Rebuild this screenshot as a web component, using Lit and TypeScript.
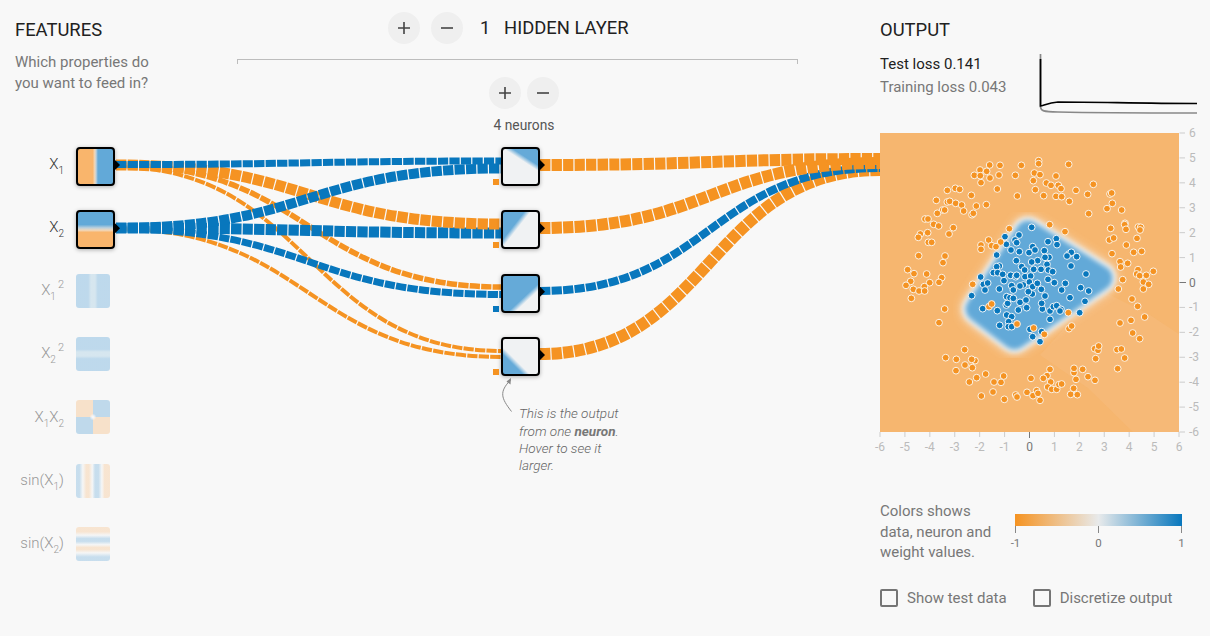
import { LitElement, html, css, svg } from "lit";
import { customElement } from "lit/decorators.js";

const BLUE = "#0877bd";
const ORANGE = "#f59322";

// x1, y1, x2, y2, width, colour. Listed back-to-front.
const LINKS: Array<[number, number, number, number, number, string]> = [
  [116, 229, 502, 357, 4, ORANGE],
  [116, 167, 502, 351, 4, ORANGE],
  [116, 229, 502, 294.5, 7, BLUE],
  [116, 165, 502, 287, 5.5, ORANGE],
  [116, 228, 502, 233, 11, BLUE],
  [116, 165, 502, 224, 11, ORANGE],
  [116, 228, 502, 168.5, 10, BLUE],
  [116, 164.5, 502, 161, 7, BLUE],
  [540, 354, 880, 170, 12, ORANGE],
  [540, 291, 880, 168, 8, BLUE],
  [540, 228, 880, 163, 12, ORANGE],
  [540, 165, 880, 159, 12, ORANGE],
];

const z6 = (p: number[][]) => p.map(([x, y]) => [870 + x / 3, 130 + y / 3]);
const z7 = (p: number[][]) => p.map(([x, y]) => [870 + x / 3, 290 + y / 3]);
const z10 = (p: number[][]) => p.map(([x, y]) => [960 + x / 3, 215 + y / 3]);

const ORANGE_POINTS = [
  ...z6([
    [359,105],[390,106],[330,120],[350,124],[313,136],[331,137],[387,135],[360,144],[333,158],[382,177],[232,181],[256,175],[269,178],[304,196],[199,211],[232,216],[239,214],[257,220],[275,225],[319,228],[349,224],[218,240],[224,240],[202,250],[281,243],[306,254],[310,250],[165,267],[174,267],[191,283],[206,288],[250,293],[151,312],[173,308],[145,322],[237,312],[175,337],[185,337],[146,377],[225,378],[219,398],[113,419],[132,431],[170,432],[215,443],[207,457],[122,454],[108,466],[179,458],[163,470],[130,478],[147,483],[164,483],
    [454,106],[506,92],[506,101],[596,103],[436,136],[493,129],[510,134],[558,138],[490,152],[529,159],[543,166],[565,166],[573,176],[496,179],[618,181],[670,163],[653,193],[442,198],[521,197],[558,199],[575,200],[598,214],[720,192],[725,189],[727,220],[711,236],[755,240],[656,251],[765,280],[764,284],[722,295],[768,298],[805,291],[812,292],[810,300],[718,330],[731,324],[801,325],[769,345],[791,367],[815,364],[726,371],[750,395],[773,400],[752,411],[804,419],[800,432],[809,437],[829,436],[850,424],[758,449],[820,456],[836,463],[820,477],[745,477],
    [539,284],[585,305],[418,296],[356,330],[333,345],[333,358],[392,336],[365,347],[378,350],[308,463],
  ]),
  ...z7([
    [124,25],[224,57],[207,98],[357,50],[365,42],[441,102],[491,114],[523,133],[595,68],[597,116],[605,108],[786,27],[803,49],[824,81],[750,99],[783,91],[788,129],[809,146],[284,179],[227,203],[259,208],[315,212],[305,208],[285,225],[307,233],[258,242],[347,252],[320,263],[298,276],[372,276],[393,277],[401,258],[334,318],[369,306],[437,315],[441,321],[403,328],[471,307],[489,317],[500,302],[504,310],[510,331],[483,265],[531,257],[520,265],[540,238],[542,276],[533,291],[545,298],[560,298],[567,284],[575,282],[602,313],[622,314],[611,295],[618,268],[612,248],[612,235],[638,238],[654,260],[675,271],[674,176],[684,181],[686,168],[677,206],[741,179],[754,177],[764,204],[743,236],
  ]),
];

const BLUE_POINTS = z10([
  [215,37],[135,65],[177,60],[165,75],[170,83],[139,88],[153,105],[178,110],[110,120],[207,113],[218,95],[225,105],[253,107],[264,80],[289,71],[291,89],[327,117],[334,112],[321,123],[350,125],[333,153],[267,127],[255,127],[169,137],[233,137],[215,141],[261,148],[118,153],[110,155],[100,173],[113,173],[128,178],[62,186],[132,197],[70,208],[83,204],[75,225],[118,222],[155,212],[152,181],[167,185],[185,155],[194,165],[221,163],[243,163],[170,181],[195,185],[212,183],[208,201],[190,210],[218,215],[232,205],[244,223],[265,165],[264,193],[278,170],[283,203],[316,205],[305,225],[362,218],[386,228],[378,177],[375,259],[330,248],[359,293],[35,242],[68,281],[112,287],[139,270],[143,265],[140,245],[150,248],[160,250],[180,262],[198,255],[200,278],[175,285],[140,300],[155,305],[146,320],[119,331],[145,335],[155,335],[210,343],[218,365],[240,380],[245,350],[270,288],[270,313],[247,282],[245,265],[255,243],[217,237],[205,230],[160,225],[180,213],[280,275],[290,272],[303,283],[300,288],
]);

const AXIS = [-6, -5, -4, -3, -2, -1, 0, 1, 2, 3, 4, 5, 6];
const OX = 880;
const OY = 125;
const axisX = (v: number) => (v + 6) * (299 / 12);
const axisY = (v: number) => 8 + (6 - v) * (299 / 12);
const toField = (pts: number[][]) => pts.map(([x, y]) => `${x - OX},${y - OY}`).join(" ");

const BLOB = toField([
  [1028, 233],
  [1100, 278],
  [1014.5, 337],
  [978, 309],
]);
const PALE_BAND = toField([
  [1100, 290],
  [1150, 315],
  [1180, 335],
  [1180, 432],
  [1133, 432],
  [1088, 388],
  [1040, 355],
]);

const FEATURES = [
  { cls: "x1", on: true, label: html`X<sub>1</sub>` },
  { cls: "x2", on: true, label: html`X<sub>2</sub>` },
  { cls: "x1s", on: false, label: html`X<sub>1</sub><sup>2</sup>` },
  { cls: "x2s", on: false, label: html`X<sub>2</sub><sup>2</sup>` },
  { cls: "xx", on: false, label: html`X<sub>1</sub>X<sub>2</sub>` },
  { cls: "s1", on: false, label: html`sin(X<sub>1</sub>)` },
  { cls: "s2", on: false, label: html`sin(X<sub>2</sub>)` },
];

const NEURONS = [
  { cls: "n1", bias: "orange" },
  { cls: "n2", bias: "orange" },
  { cls: "n3", bias: "blue" },
  { cls: "n4", bias: "orange" },
];

@customElement("app-root")
export class AppRoot extends LitElement {
  static styles = css`
    :host {
      display: block;
      width: 1210px;
      height: 636px;
      background: #f8f8f8;
      font-family: Roboto, "Liberation Sans", sans-serif;
      color: #777;
      overflow: hidden;
    }
    .app {
      position: relative;
      display: grid;
      grid-template-columns: 237px 643px 330px;
      height: 636px;
    }
    .links {
      position: absolute;
      left: 0;
      top: 0;
      width: 1210px;
      height: 636px;
    }
    .col {
      position: relative;
      min-width: 0;
    }
    h4 {
      margin: 0 0 -1px;
      padding-top: 1px;
      font-size: 18.4px;
      font-weight: 400;
      line-height: 20px;
      color: #212121;
      text-transform: uppercase;
    }
    /* features */
    .features {
      padding: 19px 0 0 15px;
    }
    .question {
      margin: 13px 0 0;
      font-size: 15px;
      line-height: 21px;
      color: #777;
    }
    .rows {
      margin: 53px 0 0 -15px;
      display: flex;
      flex-direction: column;
    }
    .row {
      height: 63.33px;
      display: flex;
      align-items: flex-start;
    }
    .label {
      width: 64px;
      height: 33px;
      display: flex;
      align-items: center;
      justify-content: flex-end;
      font-size: 15px;
      font-weight: 300;
      color: #333;
      white-space: nowrap;
    }
    .label sub {
      font-size: 10px;
      vertical-align: -5px;
      line-height: 0;
    }
    .label sup {
      font-size: 11px;
      vertical-align: 7px;
      line-height: 0;
      margin-left: 2px;
    }
    .row.off .label {
      color: #999;
    }
    .box {
      position: relative;
      box-sizing: border-box;
      width: 39px;
      height: 39px;
      margin-left: 12px;
      border: 2px solid #000;
      border-radius: 4px;
      box-shadow: 0 1px 4px rgba(0, 0, 0, 0.3);
    }
    .box::after {
      content: "";
      position: absolute;
      right: -7px;
      top: 11px;
      width: 5px;
      height: 10px;
      background: #000;
      clip-path: polygon(0 0, 100% 50%, 0 100%);
    }
    .row.off .box {
      width: 34px;
      height: 34px;
      border: none;
      box-shadow: none;
      opacity: 0.32;
      border-radius: 3px;
    }
    .row.off .box::after {
      display: none;
    }
    .x1 {
      background: linear-gradient(to right, #f9b56c 0 42%, #f0d8bc 48%, #b9cfdd 52%, #62a9d8 57%, #62a9d8 100%);
    }
    .x2 {
      background: linear-gradient(to bottom, #62a9d8 0 36%, #b9cfdd 45%, #f0d8bc 52%, #f9b56c 58%, #f9b56c 100%);
    }
    .x1s {
      background: linear-gradient(to right, #4297d3 0 36%, #8ec0dc 44%, #8ec0dc 56%, #4297d3 64%);
    }
    .x2s {
      background: linear-gradient(to bottom, #4297d3 0 36%, #8ec0dc 44%, #8ec0dc 56%, #4297d3 64%);
    }
    .xx {
      background:
        radial-gradient(circle at 50% 50%, #f0f2f3 0 4%, transparent 14%),
        conic-gradient(#4a9ad2 0 25%, #f6b26c 25% 50%, #4a9ad2 50% 75%, #f6b26c 75% 100%);
    }
    .row.off .s1,
    .row.off .s2 {
      opacity: 0.28;
    }
    .s1 {
      background: linear-gradient(
        to right,
        #4a9ad2 0 10%,
        #eff1f1 20%,
        #f6b26c 30% 38%,
        #eff1f1 48%,
        #4a9ad2 56% 66%,
        #eff1f1 76%,
        #f6b26c 84% 100%
      );
    }
    .s2 {
      background: linear-gradient(
        to bottom,
        #f6b26c 0 14%,
        #eff1f1 24%,
        #4a9ad2 34% 42%,
        #eff1f1 52%,
        #f6b26c 60% 66%,
        #eff1f1 76%,
        #4a9ad2 88% 100%
      );
    }
    /* network */
    .layers {
      display: flex;
      align-items: center;
      height: 32px;
      margin: 12px 0 0 151px;
    }
    .round {
      box-sizing: border-box;
      display: block;
      width: 32px;
      height: 32px;
      padding: 0;
      border: none;
      border-radius: 50%;
      background: #efefef;
      color: #444;
    }
    .round svg {
      display: block;
    }
    .layers .round + .round {
      margin-left: 11px;
    }
    .layers .title {
      margin-left: 17px;
      padding-bottom: 2px;
      font-size: 18.4px;
      color: #212121;
      white-space: pre;
    }
    .rule {
      box-sizing: border-box;
      width: 561px;
      height: 5px;
      margin-top: 15px;
      border: 1px solid #bdbdbd;
      border-bottom: none;
    }
    .neuron-head {
      width: 70px;
      margin: 13px 0 0 252px;
    }
    .neuron-buttons {
      display: flex;
      gap: 6px;
    }
    .neuron-count {
      margin-top: 8px;
      font-size: 13.8px;
      line-height: 16px;
      text-align: center;
      color: #555;
      white-space: nowrap;
    }
    .neurons {
      position: relative;
      display: flex;
      flex-direction: column;
      margin: 14px 0 0 264px;
    }
    .neuron {
      height: 63.33px;
    }
    .neuron .box {
      margin-left: 0;
    }
    .n1 {
      background: linear-gradient(33deg, #f0f2f3 62%, #65aad8 72%);
    }
    .n2 {
      background: linear-gradient(308deg, #f0f2f3 56%, #65aad8 66%);
    }
    .n3 {
      background: linear-gradient(317deg, #f0f2f3 30%, #65aad8 40%);
    }
    .n4 {
      background: linear-gradient(225deg, #f0f2f3 62%, #65aad8 72%);
    }
    .bias {
      position: absolute;
      left: -10px;
      bottom: -1px;
      width: 6px;
      height: 6px;
    }
    .bias.orange {
      background: #f59322;
    }
    .bias.blue {
      background: #0877bd;
    }
    .callout {
      width: 110px;
      margin: 5px 0 0 282px;
      font-size: 13.5px;
      line-height: 17.3px;
      font-style: italic;
      font-weight: 300;
      color: #666;
    }
    .callout b {
      font-weight: 700;
      color: #777;
    }
    /* output */
    .output {
      padding-top: 19px;
    }
    .losses {
      display: flex;
      height: 78px;
    }
    .loss-text {
      width: 160px;
      padding-top: 14px;
      font-size: 15px;
      line-height: 23px;
      color: #777;
    }
    .loss-text .test {
      color: #212121;
    }
    .loss-chart {
      display: block;
      overflow: visible;
    }
    .heatmap {
      display: block;
      margin-top: 8px;
      overflow: visible;
    }
    .tick-label {
      font-size: 12px;
      fill: #bbb;
      font-family: Roboto, sans-serif;
    }
    .tick-label.zero {
      fill: #777;
    }
    .legend {
      display: flex;
      margin-top: 46px;
    }
    .legend-text {
      box-sizing: border-box;
      width: 135px;
      padding-right: 17px;
      font-size: 15px;
      line-height: 20.5px;
      color: #777;
    }
    .scale {
      width: 167px;
      margin-top: 13px;
    }
    .bar {
      height: 12px;
      background: linear-gradient(to right, #f59322, #e8eaeb 50%, #0877bd);
    }
    .scale-axis {
      display: flex;
      justify-content: space-between;
      font-size: 11.5px;
      color: #777;
    }
    .scale-axis span {
      position: relative;
      width: 1px;
      height: 18px;
      display: flex;
      justify-content: center;
      background: linear-gradient(#888 0 7px, transparent 7px);
      padding-top: 11px;
      line-height: 12px;
      box-sizing: border-box;
    }
    .checks {
      display: flex;
      margin-top: 26px;
    }
    .check {
      display: flex;
      align-items: center;
      font-size: 15px;
      color: #777;
      white-space: nowrap;
    }
    .check + .check {
      margin-left: 26px;
    }
    .check i {
      display: block;
      box-sizing: border-box;
      width: 18px;
      height: 18px;
      margin-right: 9px;
      border: 2px solid #757575;
      border-radius: 2px;
    }
  `;

  private plus() {
    return html`<svg width="32" height="32" viewBox="0 0 32 32"><path d="M10 16H22M16 10V22" stroke="#444" stroke-width="1.6" fill="none" /></svg>`;
  }

  private minus() {
    return html`<svg width="32" height="32" viewBox="0 0 32 32"><path d="M10 16H22" stroke="#444" stroke-width="1.6" fill="none" /></svg>`;
  }

  private renderLinks() {
    return html`<svg class="links" viewBox="0 0 1210 636">
      ${LINKS.map(([x1, y1, x2, y2, w, c]) => {
        const mx = (x1 + x2) / 2;
        return svg`<path d="M${x1} ${y1}C${mx} ${y1} ${mx} ${y2} ${x2} ${y2}" fill="none" stroke=${c} stroke-width=${w} stroke-dasharray="10.3 1.2" />`;
      })}
      <path d="M511.5 411.5C501 398 499 392 510.5 380" fill="none" stroke="#888" stroke-width="1" />
      <path d="M511 378L510.5 384.5L506.5 381.5Z" fill="#888" />
    </svg>`;
  }

  private renderHeatmap() {
    return html`<svg class="heatmap" width="330" height="330" viewBox="0 0 330 330">
      <defs>
        <filter id="soft" x="-20%" y="-20%" width="140%" height="140%"><feGaussianBlur stdDeviation="2.5" /></filter>
        <filter id="halo" x="-20%" y="-20%" width="140%" height="140%"><feGaussianBlur stdDeviation="5" /></filter>
        <clipPath id="field"><rect x="0" y="8" width="299" height="299" /></clipPath>
      </defs>
      <g clip-path="url(#field)">
        <rect x="0" y="8" width="299" height="299" fill="#f6b66f" />
        <polygon points=${PALE_BAND} fill="#f6bc7e" opacity="0.55" />
        <polygon points=${BLOB} fill="#f3f1ec" stroke="#f3f1ec" stroke-width="34" stroke-linejoin="round" filter="url(#halo)" opacity="0.7" />
        <polygon points=${BLOB} fill="#f1f3f3" stroke="#f1f3f3" stroke-width="31" stroke-linejoin="round" filter="url(#soft)" />
        <polygon points=${BLOB} fill="#62a9d8" stroke="#62a9d8" stroke-width="25" stroke-linejoin="round" filter="url(#soft)" />
      </g>
      ${AXIS.map((v) => {
        const x = axisX(v);
        const y = axisY(v);
        const zero = v === 0;
        const stroke = zero ? "#777" : "#ccc";
        return svg`
          <path d="M${x} 307V${zero ? 313 : 312}" stroke=${stroke} fill="none" />
          <text class="tick-label ${zero ? "zero" : ""}" x=${x} y="326" text-anchor="middle">${v}</text>
          <path d="M299.5 ${y}H${zero ? 306 : 305}" stroke=${stroke} fill="none" />
          <text class="tick-label ${zero ? "zero" : ""}" x="309" y=${y + 4}>${v}</text>`;
      })}
      ${BLUE_POINTS.map(([x, y]) => svg`<circle cx=${x - OX} cy=${y - OY} r="3.4" fill=${BLUE} stroke="#f4f7f9" stroke-width="1" />`)}
      ${ORANGE_POINTS.map(([x, y]) => svg`<circle cx=${x - OX} cy=${y - OY} r="3.4" fill=${ORANGE} stroke="#fbf3e8" stroke-width="1" />`)}
    </svg>`;
  }

  render() {
    return html`<div class="app">
      ${this.renderLinks()}
      <section class="col features">
        <h4>Features</h4>
        <p class="question">Which properties do<br />you want to feed in?</p>
        <div class="rows">
          ${FEATURES.map(
            (f) => html`<div class="row ${f.on ? "" : "off"}">
              <div class="label"><span>${f.label}</span></div>
              <div class="box ${f.cls}"></div>
            </div>`,
          )}
        </div>
      </section>
      <section class="col network">
        <div class="layers">
          <button class="round">${this.plus()}</button>
          <button class="round">${this.minus()}</button>
          <span class="title">1   HIDDEN LAYER</span>
        </div>
        <div class="rule"></div>
        <div class="neuron-head">
          <div class="neuron-buttons">
            <button class="round">${this.plus()}</button>
            <button class="round">${this.minus()}</button>
          </div>
          <div class="neuron-count">4 neurons</div>
        </div>
        <div class="neurons">
          ${NEURONS.map(
            (n) => html`<div class="neuron">
              <div class="box ${n.cls}"><span class="bias ${n.bias}"></span></div>
            </div>`,
          )}
        </div>
        <div class="callout">This is the output from one <b>neuron</b>. Hover to see it larger.</div>
      </section>
      <section class="col output">
        <h4>Output</h4>
        <div class="losses">
          <div class="loss-text">
            <div class="test">Test loss 0.141</div>
            <div>Training loss 0.043</div>
          </div>
          <svg class="loss-chart" width="157" height="78" viewBox="0 0 157 78">
            <path d="M0.5 15V68C1 72 3 72.5 18 73C60 74 100 74 157 74" fill="none" stroke="#888" stroke-width="1.7" />
            <path d="M0.5 20V67C3 67 8 63.5 18 63C60 63 100 64.5 157 64.5" fill="none" stroke="#000" stroke-width="1.7" />
          </svg>
        </div>
        ${this.renderHeatmap()}
        <div class="legend">
          <div class="legend-text">Colors shows data, neuron and weight values.</div>
          <div class="scale">
            <div class="bar"></div>
            <div class="scale-axis"><span>-1</span><span>0</span><span>1</span></div>
          </div>
        </div>
        <div class="checks">
          <div class="check"><i></i>Show test data</div>
          <div class="check"><i></i>Discretize output</div>
        </div>
      </section>
    </div>`;
  }
}
